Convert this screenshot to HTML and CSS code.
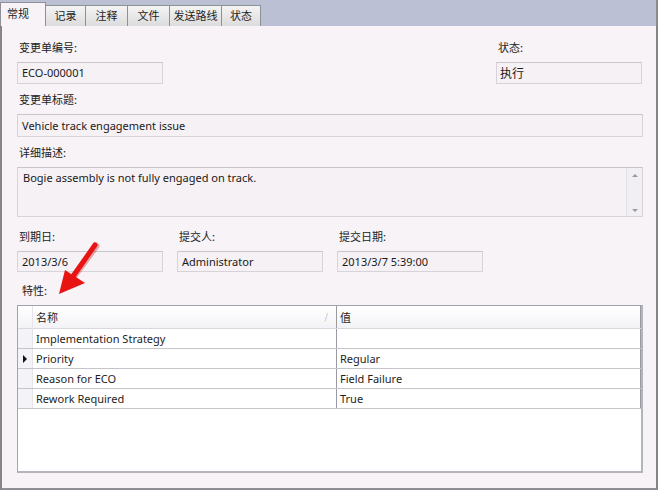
FILE: index.html
```html
<!DOCTYPE html>
<html lang="zh-CN">

<head>
    <meta charset="UTF-8">
    <title>ECO-000001</title>
    <link rel="stylesheet" href="styles.css">
</head>

<body>
    <div class="tabs">
        <div class="tab active">常规</div>
        <div class="tab" style="width: 40px">记录</div>
        <div class="tab" style="width: 42px">注释</div>
        <div class="tab" style="width: 42px">文件</div>
        <div class="tab" style="width: 52px">发送路线</div>
        <div class="tab" style="width: 39px">状态</div>
    </div>

    <div class="panel">
        <div class="row between">
            <div class="group">
                <div class="label">变更单编号:</div>
                <div class="field short">ECO-000001</div>
            </div>
            <div class="group">
                <div class="label">状态:</div>
                <div class="field short cjk">执行</div>
            </div>
        </div>

        <div class="group">
            <div class="label">变更单标题:</div>
            <div class="field wide">Vehicle track engagement issue</div>
        </div>

        <div class="group">
            <div class="label">详细描述:</div>
            <div class="field memo">
                <div class="memo-text">Bogie assembly is not fully engaged on track.</div>
                <div class="scrollbar">
                    <span class="arrow-up"></span>
                    <span class="arrow-down"></span>
                </div>
            </div>
        </div>

        <div class="row dates">
            <div class="group">
                <div class="label">到期日:</div>
                <div class="field short date">2013/3/6</div>
            </div>
            <div class="group">
                <div class="label">提交人:</div>
                <div class="field short date">Administrator</div>
            </div>
            <div class="group">
                <div class="label">提交日期:</div>
                <div class="field short date">2013/3/7 5:39:00</div>
            </div>
        </div>

        <div class="label props-label">特性:</div>
        <div class="grid">
            <div class="grid-row header">
                <div class="cell indicator"></div>
                <div class="cell name">名称<span class="sort">/</span></div>
                <div class="cell value">值</div>
            </div>
            <div class="grid-row">
                <div class="cell indicator"></div>
                <div class="cell name">Implementation Strategy</div>
                <div class="cell value"></div>
            </div>
            <div class="grid-row">
                <div class="cell indicator"><span class="current"></span></div>
                <div class="cell name">Priority</div>
                <div class="cell value">Regular</div>
            </div>
            <div class="grid-row">
                <div class="cell indicator"></div>
                <div class="cell name">Reason for ECO</div>
                <div class="cell value">Field Failure</div>
            </div>
            <div class="grid-row">
                <div class="cell indicator"></div>
                <div class="cell name">Rework Required</div>
                <div class="cell value">True</div>
            </div>
        </div>

        <!-- callout arrow pointing at the properties label -->
        <svg class="callout" width="120" height="80" viewBox="0 0 120 80">
            <line x1="92" y1="16" x2="70" y2="46" stroke="#b80000" stroke-width="7" stroke-linecap="round" opacity="0.3"/>
            <line x1="91" y1="15" x2="70" y2="45" stroke="#e81414" stroke-width="5" stroke-linecap="round"/>
            <polygon points="55,64 61,40 81,53" fill="#e81414"/>
        </svg>
    </div>
</body>

</html>
```

FILE: styles.css
```css
body {
    margin: 0;
    padding: 0;
    background-color: #fff;
    font-family: "Segoe UI", "Noto Sans", "Noto Sans CJK SC", sans-serif;
    font-size: 11px;
    color: #1e1e1e;
}

.tabs {
    width: 658px;
    height: 26px;
    background-color: #bcc0d4;
    display: flex;
    align-items: flex-end;
    border-right: 2px solid #8a8a8e;
    box-sizing: border-box;
}

.tab {
    height: 21px;
    box-sizing: border-box;
    border: 1px solid #8d9096;
    border-bottom: none;
    border-left: none;
    background: linear-gradient(#f4f4f4, #dcdcdc);
    font-family: "Noto Sans CJK SC", sans-serif;
    font-size: 11px;
    line-height: 19px;
    text-align: center;
}

.tab.active {
    width: 46px;
    height: 24px;
    border-left: 1px solid #8d9096;
    background: #f7f3f7;
    line-height: 20px;
    text-align: left;
    padding-left: 6px;
}

.panel {
    position: relative;
    width: 658px;
    height: 464px;
    box-sizing: border-box;
    background-color: #f7f3f7;
    border-left: 2px solid #858589;
    border-right: 2px solid #858589;
    border-bottom: 2px solid #8f8f93;
    padding: 13px 14px 0 15px;
}

.row {
    display: flex;
}

.row.between {
    justify-content: space-between;
}

.row.dates {
    margin-top: 11px;
    gap: 14px;
}

.group {
    margin-bottom: 7px;
}

.label {
    height: 16px;
    line-height: 16px;
    margin-bottom: 7px;
    padding-left: 2px;
    font-family: "Noto Sans CJK SC", sans-serif;
    font-size: 11px;
    color: #222;
}

.field {
    box-sizing: border-box;
    height: 22px;
    line-height: 20px;
    padding-left: 4px;
    background-color: #f5f1f5;
    border: 1px solid #d6d4d8;
    border-top-color: #c8c6ca;
    color: #1a1a1a;
}

.field.cjk {
    font-family: "Noto Sans CJK SC", sans-serif;
    font-size: 12px;
    padding-left: 3px;
}

.field.short {
    width: 146px;
}

.field.date {
    height: 21px;
    line-height: 19px;
}

.field.wide {
    width: 626px;
    height: 23px;
    line-height: 21px;
}

.field.memo {
    width: 626px;
    height: 50px;
    display: flex;
    padding-left: 0;
}

.memo-text {
    flex: 1;
    padding: 2px 5px;
    line-height: 16px;
}

.scrollbar {
    width: 15px;
    background-color: #f1eff3;
    border-left: 1px solid #e2e0e4;
    display: flex;
    flex-direction: column;
    justify-content: space-between;
    align-items: center;
    padding: 6px 0 4px;
}

.arrow-up {
    width: 0;
    height: 0;
    border-left: 3px solid transparent;
    border-right: 3px solid transparent;
    border-bottom: 3px solid #9a9a9e;
}

.arrow-down {
    width: 0;
    height: 0;
    border-left: 3px solid transparent;
    border-right: 3px solid transparent;
    border-top: 3px solid #9a9a9e;
}

.props-label {
    margin-top: 3px;
    padding-left: 5px;
}

.grid {
    width: 626px;
    height: 168px;
    box-sizing: border-box;
    background-color: #fff;
    border: 1px solid #a3a3ab;
    border-bottom: 2px solid #b4b4bc;
    border-right: 2px solid #b4b4bc;
}

.grid-row {
    display: flex;
    height: 20px;
    box-sizing: border-box;
    border-bottom: 1px solid #c4c4ca;
}

.grid-row.header {
    height: 23px;
    background: linear-gradient(#ffffff, #f3f3f7);
    border-bottom: 1px solid #d8d8de;
}

.cell {
    line-height: 19px;
    padding-left: 3px;
    box-sizing: border-box;
    white-space: nowrap;
}

.header .cell {
    line-height: 22px;
    font-family: "Noto Sans CJK SC", sans-serif;
    font-size: 11px;
}

.cell.indicator {
    width: 15px;
    padding: 0;
    background-color: #f3f3f8;
    border-right: 1px solid #e4e4ea;
    display: flex;
    align-items: center;
    justify-content: center;
}

.header .cell.indicator {
    background: transparent;
}

.cell.name {
    width: 304px;
    border-right: 1px solid #9a9aa2;
    position: relative;
}

.cell.value {
    flex: 1;
    border-right: 1px solid #9a9aa2;
}

.sort {
    position: absolute;
    right: 8px;
    top: 0;
    color: #b0b0b0;
    font-size: 9px;
}

.current {
    width: 0;
    height: 0;
    border-top: 4px solid transparent;
    border-bottom: 4px solid transparent;
    border-left: 4px solid #111;
}

.callout {
    position: absolute;
    left: 2px;
    top: 204px;
}
```
